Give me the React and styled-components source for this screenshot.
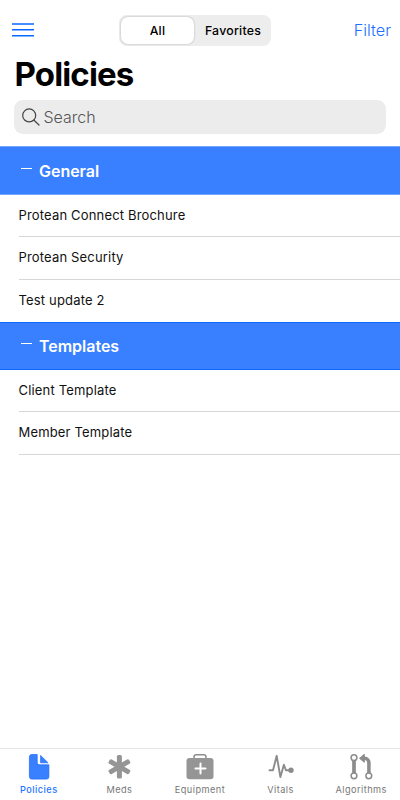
import React, { useState } from "react";
import styled, { createGlobalStyle } from "styled-components";

const sections = [
  {
    title: "General",
    items: ["Protean Connect Brochure", "Protean Security", "Test update 2"],
  },
  {
    title: "Templates",
    items: ["Client Template", "Member Template"],
  },
];

const PoliciesIcon = () => (
  <svg width="22" height="26" viewBox="0 0 22 26">
    <path
      d="M3.8.5h5.400v7.600c0 1.800 1 2.700 2.700 2.700h9v11.900a2.400 2.400 0 0 1-2.400 2.400H3.800a2.400 2.400 0 0 1-2.400-2.400V2.900A2.400 2.400 0 0 1 3.800.5Z"
      fill="#3880ff"
      stroke="#1a69ff"
      strokeWidth=".7"
    />
    <path
      d="M12.600 1.400v7.400h7.400Z"
      fill="#3880ff"
      stroke="#1a69ff"
      strokeWidth=".7"
    />
  </svg>
);

const MedsIcon = () => (
  <svg width="24" height="26" viewBox="0 0 24 26">
    <g fill="#959595">
      {[0, 60, 120].map((angle) => (
        <rect
          key={angle}
          x="9.900"
          y="1"
          width="5"
          height="23.500"
          rx="1.500"
          transform={`rotate(${angle} 12.400 12.750)`}
        />
      ))}
    </g>
  </svg>
);

const EquipmentIcon = () => (
  <svg width="28" height="26" viewBox="0 0 28 26">
    <path
      d="M8 5V2.900A2.200 2.200 0 0 1 10.200 .8h7.600A2.200 2.200 0 0 1 20 2.900V5"
      fill="none"
      stroke="#8c8c8c"
      strokeWidth="1.500"
    />
    <rect x=".5" y="4" width="27" height="21.300" rx="3" fill="#959595" />
    <path
      d="M14.500 9.500v10M9.500 14.500h10"
      stroke="#fff"
      strokeWidth="2"
      strokeLinecap="round"
    />
  </svg>
);

const VitalsIcon = () => (
  <svg width="26" height="26" viewBox="0 0 26 26">
    <path
      d="M1.500 16.300H5L8.700 1.800l3.700 21.300 3.500-12.300 2 5.500H22"
      fill="none"
      stroke="#8c8c8c"
      strokeWidth="1.900"
      strokeLinecap="round"
      strokeLinejoin="round"
    />
    <circle cx="23" cy="16.200" r="2.700" fill="#8c8c8c" />
  </svg>
);

const AlgorithmsIcon = () => (
  <svg width="24" height="26" viewBox="0 0 24 26">
    <g fill="none" stroke="#8c8c8c">
      <path d="M5 6v13" strokeWidth="3.700" />
      <path d="M14 4.300h1.400c2.800 0 4.500 1.900 4.500 4.700V19" strokeWidth="3.500" />
      <g fill="#fff" strokeWidth="1.500">
        <circle cx="5" cy="3.700" r="2.900" />
        <circle cx="5" cy="21.800" r="2.900" />
        <circle cx="19.800" cy="21.800" r="2.900" />
      </g>
    </g>
    <path
      d="M10.500 4.300L15.300 .3v8Z"
      fill="#8c8c8c"
      stroke="#8c8c8c"
      strokeLinejoin="round"
    />
  </svg>
);

const tabs = [
  { label: "Policies", icon: PoliciesIcon },
  { label: "Meds", icon: MedsIcon },
  { label: "Equipment", icon: EquipmentIcon },
  { label: "Vitals", icon: VitalsIcon },
  { label: "Algorithms", icon: AlgorithmsIcon },
];

export default function App() {
  const [segment, setSegment] = useState("All");
  const [currentTab, setCurrentTab] = useState("Policies");
  const [closed, setClosed] = useState([]);

  const toggleSection = (title) => {
    setClosed(
      closed.includes(title)
        ? closed.filter((t) => t !== title)
        : [...closed, title]
    );
  };

  return (
    <>
      <GlobalStyle />
      <Page>
        <Toolbar>
          <MenuButton aria-label="Menu">
            <svg width="22" height="14" viewBox="0 0 22 14">
              <path
                d="M0 1h22M0 6.800h22M0 12.700h22"
                stroke="#0a68ff"
                strokeWidth="1.600"
              />
            </svg>
          </MenuButton>
          <Segments>
            {["All", "Favorites"].map((name) => (
              <Segment
                key={name}
                $active={segment === name}
                onClick={() => setSegment(name)}>
                {name}
              </Segment>
            ))}
          </Segments>
          <FilterButton>Filter</FilterButton>
        </Toolbar>
        <Title>Policies</Title>
        <SearchBar>
          <svg width="18" height="18" viewBox="0 0 18 18">
            <g fill="none" stroke="#444" strokeWidth="1.2" strokeLinecap="round">
              <circle cx="7.2" cy="7.4" r="6.5" />
              <path d="M12 12.200l5 4.800" />
            </g>
          </svg>
          <input type="text" placeholder="Search" />
        </SearchBar>
        <Content>
          {sections.map(({ title, items }) => (
            <section key={title}>
              <SectionHeader onClick={() => toggleSection(title)}>
                <Dash />
                <h2>{title}</h2>
              </SectionHeader>
              {!closed.includes(title) &&
                items.map((item) => <Row key={item}>{item}</Row>)}
            </section>
          ))}
        </Content>
        <TabBar>
          {tabs.map(({ label, icon: Icon }) => (
            <Tab
              key={label}
              $active={currentTab === label}
              onClick={() => setCurrentTab(label)}>
              <Icon />
              <span>{label}</span>
            </Tab>
          ))}
        </TabBar>
      </Page>
    </>
  );
}

const GlobalStyle = createGlobalStyle`
  * {
    box-sizing: border-box;
  }
  body {
    margin: 0;
    background: #fff;
    font-family: Inter, "Liberation Sans", sans-serif;
  }
  button {
    border: 0;
    padding: 0;
    background: none;
    font-family: inherit;
    cursor: pointer;
  }
`;

const Page = styled.div`
  display: flex;
  flex-direction: column;
  width: 100%;
  height: 100vh;
  overflow: hidden;
  color: #000;
`;

const Toolbar = styled.header`
  display: grid;
  grid-template-columns: 107px 152px 1fr;
  align-items: center;
  height: 46px;
  padding: 14px 9px 0 12px;
`;

const MenuButton = styled.button`
  display: flex;
  width: 22px;
  height: 14px;
`;

const Segments = styled.div`
  display: flex;
  height: 31px;
  padding: 2px;
  border-radius: 8px;
  background: #ededed;
`;

const Segment = styled.button`
  flex: ${({ $active }) => ($active ? "0 0 73px" : 1)};
  padding-left: ${({ $active }) => ($active ? 0 : "3px")};
  border-radius: 7px;
  font-size: 12.300px;
  font-weight: 500;
  letter-spacing: 0.25px;
  color: #000;
  background: ${({ $active }) => ($active ? "#fff" : "transparent")};
  box-shadow: ${({ $active }) =>
    $active ? "0 0 2px rgba(0, 0, 0, 0.3)" : "none"};
`;

const FilterButton = styled.button`
  justify-self: end;
  font-size: 16.200px;
  font-weight: 300;
  line-height: 20px;
  color: #1c70ff;
`;

const Title = styled.h1`
  margin: 7px 0 0 14.500px;
  font-size: 33px;
  line-height: 42px;
  font-weight: 700;
  letter-spacing: -0.85px;
`;

const SearchBar = styled.label`
  display: flex;
  align-items: center;
  gap: 4px;
  height: 34px;
  margin: 5px 14px 12px;
  padding: 0 7px 0 7.500px;
  border-radius: 9px;
  background: #ececec;
  flex-shrink: 0;
  input {
    flex: 1;
    min-width: 0;
    padding: 0;
    border: 0;
    outline: none;
    background: none;
    font-family: inherit;
    font-size: 16px;
    font-weight: 300;
    color: #000;
    &::placeholder {
      color: #555;
      opacity: 1;
    }
  }
`;

const Content = styled.main`
  flex: 1;
  overflow: hidden;
`;

const SectionHeader = styled.div`
  display: flex;
  align-items: center;
  gap: 7px;
  height: 48px;
  padding-left: 21.400px;
  border: solid #0f69ff;
  border-width: 1px 0;
  background: #3880ff;
  color: #fff;
  cursor: pointer;
  section:first-child > & {
    height: 49px;
    border-color: #74a6fb;
  }
  h2 {
    margin: 0;
    font-size: 16px;
    font-weight: 600;
    letter-spacing: -0.02px;
  }
`;

const Dash = styled.span`
  width: 10.600px;
  height: 1px;
  margin-bottom: 5px;
  background: #fff;
`;

const Row = styled.div`
  display: flex;
  align-items: center;
  height: 42.400px;
  margin-left: 18.500px;
  padding-bottom: 1.200px;
  border-bottom: 1px solid #d7d7d7;
  font-size: 13px;
  letter-spacing: 0.17px;
  color: #111;
  section:first-child &:last-child {
    height: 42.200px;
    border-bottom-color: transparent;
  }
`;

const TabBar = styled.nav`
  display: flex;
  flex-shrink: 0;
  height: 52px;
  margin: 0 -1.500px;
  border-top: 1px solid #e6e6e6;
`;

const Tab = styled.button`
  display: flex;
  flex: 1 1 0;
  flex-direction: column;
  align-items: center;
  gap: 4px;
  padding-top: 5px;
  font-size: 9.200px;
  line-height: 12px;
  font-weight: ${({ $active }) => ($active ? 500 : 400)};
  letter-spacing: 0.45px;
  color: ${({ $active }) => ($active ? "#2475ff" : "#777")};
`;
